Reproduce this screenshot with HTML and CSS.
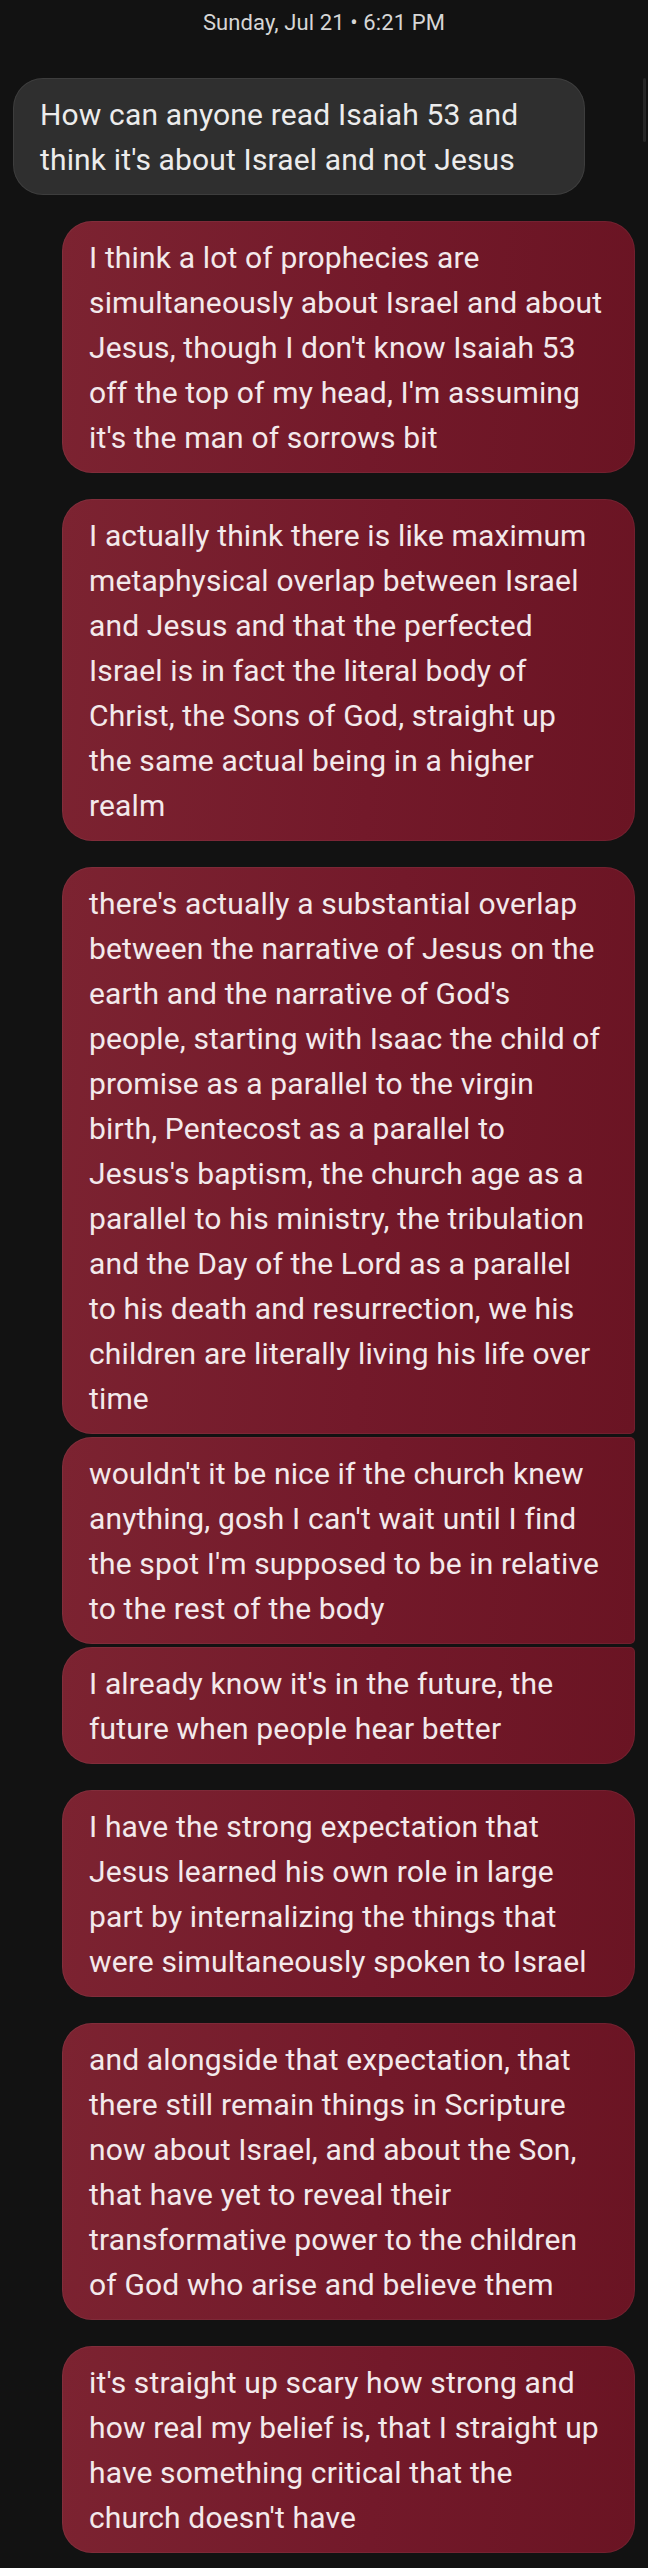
FILE: index.html
```html
<!DOCTYPE html>
<html lang="en">
<head>
<meta charset="utf-8">
<title>Messages</title>
<link rel="stylesheet" href="styles.css">
</head>
<body>
<main class="thread">
  <div class="scroll-thumb"></div>
  <div class="timestamp">Sunday, Jul 21 • 6:21 PM</div>

  <div class="msg msg-in">How can anyone read Isaiah 53 and<br>think it's about Israel and not Jesus</div>

  <div class="msg msg-out">I think a lot of prophecies are<br>simultaneously about Israel and about<br>Jesus, though I don't know Isaiah 53<br>off the top of my head, I'm assuming<br>it's the man of sorrows bit</div>

  <div class="msg msg-out">I actually think there is like maximum<br>metaphysical overlap between Israel<br>and Jesus and that the perfected<br>Israel is in fact the literal body of<br>Christ, the Sons of God, straight up<br>the same actual being in a higher<br>realm</div>

  <div class="group">
    <div class="msg msg-out first">there's actually a substantial overlap<br>between the narrative of Jesus on the<br>earth and the narrative of God's<br>people, starting with Isaac the child of<br>promise as a parallel to the virgin<br>birth, Pentecost as a parallel to<br>Jesus's baptism, the church age as a<br>parallel to his ministry, the tribulation<br>and the Day of the Lord as a parallel<br>to his death and resurrection, we his<br>children are literally living his life over<br>time</div>
    <div class="msg msg-out middle">wouldn't it be nice if the church knew<br>anything, gosh I can't wait until I find<br>the spot I'm supposed to be in relative<br>to the rest of the body</div>
    <div class="msg msg-out last">I already know it's in the future, the<br>future when people hear better</div>
  </div>

  <div class="msg msg-out">I have the strong expectation that<br>Jesus learned his own role in large<br>part by internalizing the things that<br>were simultaneously spoken to Israel</div>

  <div class="msg msg-out">and alongside that expectation, that<br>there still remain things in Scripture<br>now about Israel, and about the Son,<br>that have yet to reveal their<br>transformative power to the children<br>of God who arise and believe them</div>

  <div class="msg msg-out">it's straight up scary how strong and<br>how real my belief is, that I straight up<br>have something critical that the<br>church doesn't have</div>
</main>
</body>
</html>
```

FILE: styles.css
```css
* {
  box-sizing: border-box;
}

html, body {
  margin: 0;
  padding: 0;
  background: #121212;
}

body {
  font-family: Roboto, "Noto Sans", "Liberation Sans", sans-serif;
  color: #eeeeee;
}

.thread {
  position: relative;
  display: flex;
  flex-direction: column;
  gap: 26px;
  padding: 10px 13px 15px 13px;
  min-height: 2568px;
}

.timestamp {
  text-align: center;
  font-size: 22px;
  line-height: 26px;
  letter-spacing: 0.1px;
  color: #d6d6d6;
  margin-bottom: 16px;
}

.msg {
  font-size: 30px;
  line-height: 45px;
  letter-spacing: 0.15px;
  padding: 13.5px 16px 13.5px 27px;
  border-radius: 30px;
  white-space: nowrap;
}

.msg-in {
  width: 572px;
  background: #2f2f2f;
  color: #ececec;
  box-shadow: inset 0 0 0 1px rgba(255, 255, 255, 0.07);
}

.msg-out {
  width: 573px;
  margin-left: 49px;
  color: #f3e9eb;
  background: linear-gradient(95deg, #7c2331 0%, #73192a 55%, #6a1423 100%);
  box-shadow: inset 0 0 0 1px rgba(255, 255, 255, 0.05);
}

.group {
  display: flex;
  flex-direction: column;
  gap: 3px;
}

.group .first {
  border-bottom-right-radius: 5px;
}

.group .middle {
  border-top-right-radius: 5px;
  border-bottom-right-radius: 5px;
}

.group .last {
  border-top-right-radius: 5px;
}

.scroll-thumb {
  position: absolute;
  top: 78px;
  right: 2px;
  width: 3px;
  height: 64px;
  border-radius: 2px;
  background: #262626;
}
```
